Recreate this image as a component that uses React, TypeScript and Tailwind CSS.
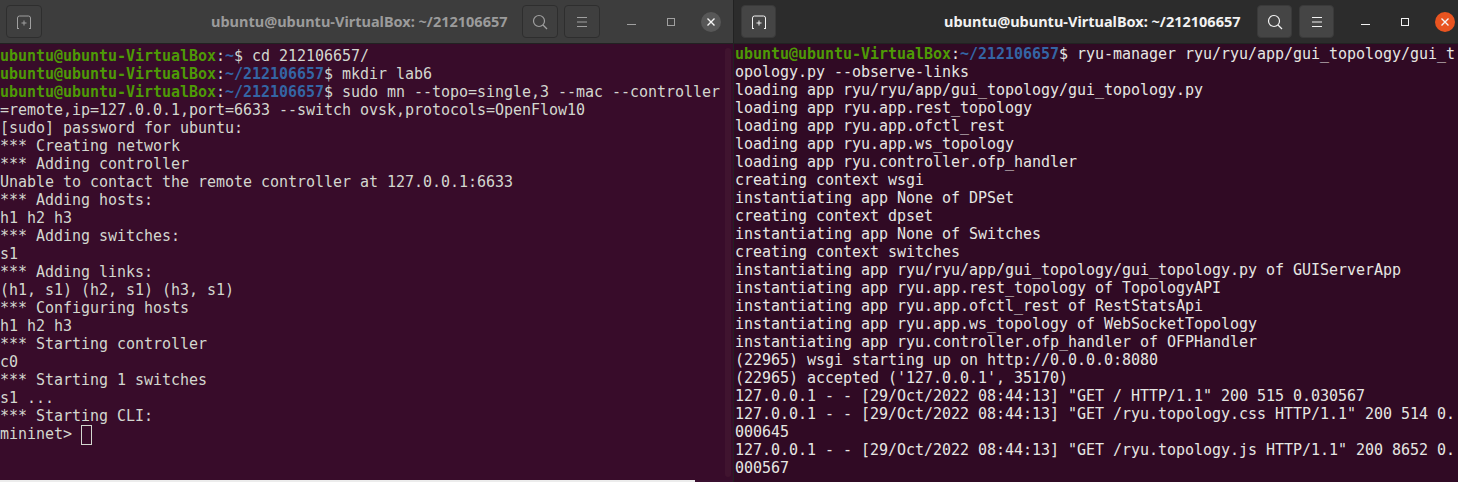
import React from "react";

const G = "text-[#4e9a06] font-bold";
const B = "text-[#3465a4] font-bold";
const P = (path: string, rest: string) => (
  <>
    <span className={G}>ubuntu@ubuntu-VirtualBox</span>:<span className={B}>{path}</span>
    {"$ " + rest}
  </>
);

const leftLines: React.ReactNode[] = [
  P("~", "cd 212106657/"),
  P("~/212106657", "mkdir lab6"),
  P("~/212106657", "sudo mn --topo=single,3 --mac --controller"),
  "=remote,ip=127.0.0.1,port=6633 --switch ovsk,protocols=OpenFlow10",
  "[sudo] password for ubuntu:",
  "*** Creating network",
  "*** Adding controller",
  "Unable to contact the remote controller at 127.0.0.1:6633",
  "*** Adding hosts:",
  "h1 h2 h3",
  "*** Adding switches:",
  "s1",
  "*** Adding links:",
  "(h1, s1) (h2, s1) (h3, s1)",
  "*** Configuring hosts",
  "h1 h2 h3",
  "*** Starting controller",
  "c0",
  "*** Starting 1 switches",
  "s1 ...",
  "*** Starting CLI:",
  <>
    {"mininet> "}
    <span className="inline-block w-[11px] h-[20px] border border-[#d3d7cf] align-top" />
  </>,
];

const rightLines: React.ReactNode[] = [
  P("~/212106657", "ryu-manager ryu/ryu/app/gui_topology/gui_t"),
  "opology.py --observe-links",
  "loading app ryu/ryu/app/gui_topology/gui_topology.py",
  "loading app ryu.app.rest_topology",
  "loading app ryu.app.ofctl_rest",
  "loading app ryu.app.ws_topology",
  "loading app ryu.controller.ofp_handler",
  "creating context wsgi",
  "instantiating app None of DPSet",
  "creating context dpset",
  "instantiating app None of Switches",
  "creating context switches",
  "instantiating app ryu/ryu/app/gui_topology/gui_topology.py of GUIServerApp",
  "instantiating app ryu.app.rest_topology of TopologyAPI",
  "instantiating app ryu.app.ofctl_rest of RestStatsApi",
  "instantiating app ryu.app.ws_topology of WebSocketTopology",
  "instantiating app ryu.controller.ofp_handler of OFPHandler",
  "(22965) wsgi starting up on http://0.0.0.0:8080",
  "(22965) accepted ('127.0.0.1', 35170)",
  '127.0.0.1 - - [29/Oct/2022 08:44:13] "GET / HTTP/1.1" 200 515 0.030567',
  '127.0.0.1 - - [29/Oct/2022 08:44:13] "GET /ryu.topology.css HTTP/1.1" 200 514 0.',
  "000645",
  '127.0.0.1 - - [29/Oct/2022 08:44:13] "GET /ryu.topology.js HTTP/1.1" 200 8652 0.',
  "000567",
];

function NewTab({ c }: { c: string }) {
  return (
    <svg width="16" height="14" viewBox="0 0 16 14" fill="none" stroke={c} strokeWidth="1">
      <path d="M1.5 13.5V3a2 2 0 0 1 2-2h9a2 2 0 0 1 2 2v10.5M1 13.5h2M13 13.5h2M5.5 8h5M8 5.5v5" />
    </svg>
  );
}
function Search({ c }: { c: string }) {
  return (
    <svg width="16" height="16" viewBox="0 0 16 16" fill="none" stroke={c} strokeWidth="1.2">
      <circle cx="7" cy="7" r="5.5" />
      <path d="M11 11l4 4" />
    </svg>
  );
}
function Menu({ c }: { c: string }) {
  return (
    <svg width="12" height="12" viewBox="0 0 12 12" fill="none" stroke={c} strokeWidth="1">
      <path d="M1 1.5h10M1 6h10M1 10.5h10" />
    </svg>
  );
}

function Window({
  focused,
  lines,
  titleOffset,
  size,
}: {
  focused: boolean;
  lines: React.ReactNode[];
  titleOffset: string;
  size: string;
}) {
  const c = focused ? "#f2f2f2" : "#a0a0a0";
  const btn = focused
    ? "w-[35px] bg-[#454545] border-[#3a3a3a]"
    : "w-[36px] bg-[#3f3f3f] border-[#2e2e2e]";
  return (
    <div className={`flex flex-col ${size}`}>
      <div
        className={`h-[44px] shrink-0 flex items-center border-b border-[#222222] ${
          focused ? "bg-[#2c2c2c] pl-[7px] pr-[3px]" : "bg-[#3d3d3d] pl-[6px] pr-[12px]"
        }`}
      >
        <div className={`h-[33px] rounded-[4px] border flex items-center justify-center ${btn}`}>
          <NewTab c={c} />
        </div>
        <div
          className={`${titleOffset} text-[14.5px] font-bold whitespace-nowrap`}
          style={{ color: focused ? "#f2f2f2" : "#9b9b9b", fontFamily: '"Noto Sans", sans-serif' }}
        >
          ubuntu@ubuntu-VirtualBox: ~/212106657
        </div>
        <div className="ml-auto flex items-center">
          <div className={`h-[33px] rounded-[4px] border flex items-center justify-center ${btn}`}>
            <Search c={c} />
          </div>
          <div
            className={`h-[33px] rounded-[4px] border flex items-center justify-center ${btn} ${
              focused ? "ml-[7px]" : "ml-[6px]"
            }`}
          >
            <Menu c={c} />
          </div>
          <div className="ml-[11px] w-[40px] flex justify-center">
            <div className="w-[9px] h-[1px] mt-[6px]" style={{ background: c }} />
          </div>
          <div className="w-[40px] flex justify-center">
            <div className="w-[8px] h-[8px] border" style={{ borderColor: c }} />
          </div>
          <div className="ml-[10px] w-[20px] flex justify-center">
            <div
              className={`w-[20px] h-[20px] rounded-full flex items-center justify-center ${
                focused ? "bg-[#e95420]" : "bg-[#575757]"
              }`}
            >
              <svg width="10" height="10" viewBox="0 0 10 10" stroke="#f5f5f5" strokeWidth="1.4">
                <path d="M1.5 1.5l7 7M8.5 1.5l-7 7" />
              </svg>
            </div>
          </div>
        </div>
      </div>
      <div className={`relative flex-1 overflow-hidden ${focused ? "bg-[#300a24] pt-[1px] pl-[1px]" : "bg-[#380c2a] pt-[3px]"}`}>
        <div
          className={`text-[15px] leading-[18px] whitespace-pre tracking-[-0.03px] ${focused ? "text-[#e6e6e2]" : "text-[#d3d7cf]"}`}
          style={{ fontFamily: '"DejaVu Sans Mono", monospace' }}
        >
          {lines.map((l, i) => (
            <div key={i} className="h-[18px]">
              {l}
            </div>
          ))}
        </div>
        {!focused && <div className="absolute right-[2px] top-[4px] bottom-[3px] w-[6px] rounded-full bg-[#40142f]" />}
      </div>
    </div>
  );
}

export default function App() {
  return (
    <div className="w-[1458px] h-[482px] overflow-hidden flex items-start">
      <div className="w-[733px] h-[482px] flex flex-col">
        <Window focused={false} lines={leftLines} titleOffset="ml-[169px]" size="w-[733px] h-[480px]" />
        <div className="h-[2px] flex">
          <div className="w-[695px] bg-[#ececec]" />
          <div className="flex-1 bg-[#3a1030]" />
        </div>
      </div>
      <Window focused lines={rightLines} titleOffset="ml-[168px]" size="w-[725px] h-[482px] border-l border-[#222222]" />
    </div>
  );
}
